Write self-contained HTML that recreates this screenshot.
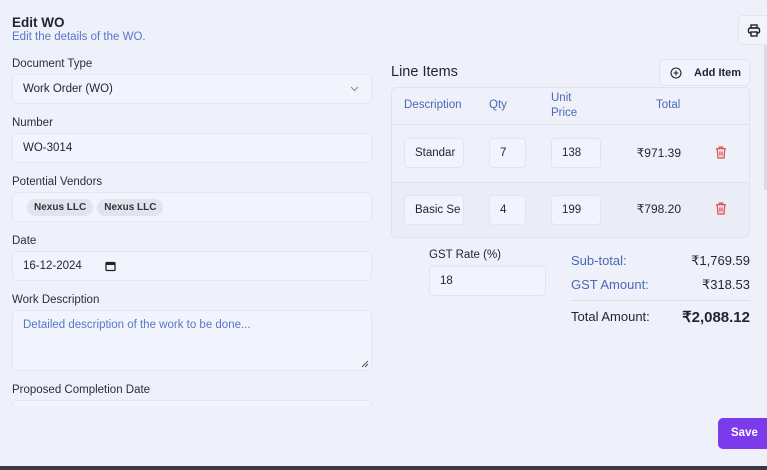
<!DOCTYPE html><html><head><style>
*{box-sizing:border-box;margin:0;padding:0}
body{width:767px;height:470px;overflow:hidden;background:#eef1fa;font-family:"Liberation Sans",sans-serif;color:#1f2430;position:relative;font-size:12px}
.a{position:absolute}
.lbl{position:absolute;left:12px;font-size:11.5px;color:#2a2f3a}
.box{position:absolute;left:12px;width:360px;height:30px;border:1px solid #e3e7f1;border-radius:5px;background:#f1f4fc;font-size:11.5px;padding:0 10px;display:flex;align-items:center}
.in{position:absolute;height:30px;border:1px solid #e1e5ef;border-radius:4px;background:#f1f4fc;font-size:11.5px;display:flex;align-items:center;padding-left:10px;overflow:hidden;white-space:nowrap}
.chip{background:#dfe4ee;border-radius:9px;padding:3px 7px;font-size:10px;font-weight:bold;margin-right:4px;color:#333}
.blue{color:#4a68b5}
</style></head><body>
<div class="a" style="left:12px;top:15px;font-size:13.5px;font-weight:bold">Edit WO</div>
<div class="a blue" style="left:12px;top:31px;font-size:11.5px;color:#5577c7">Edit the details of the WO.</div>

<div class="lbl" style="top:58px">Document Type</div>
<div class="box" style="top:74px">Work Order (WO)<svg class="a" style="right:12px;top:11px" width="9" height="6" viewBox="0 0 9 6"><path d="M1 1l3.5 3.5L8 1" stroke="#888" fill="none"/></svg></div>
<div class="lbl" style="top:117px">Number</div>
<div class="box" style="top:133px">WO-3014</div>
<div class="lbl" style="top:176px">Potential Vendors</div>
<div class="box" style="top:192px;padding-left:14px"><span class="chip">Nexus LLC</span><span class="chip">Nexus LLC</span></div>
<div class="lbl" style="top:235px">Date</div>
<div class="box" style="top:251px">16-12-2024<svg style="margin-left:23px" width="11" height="11" viewBox="0 0 11 11"><rect x="1" y="1.5" width="9" height="8" rx="1" fill="none" stroke="#222" stroke-width="1.3"/><rect x="1" y="1.5" width="9" height="2.5" fill="#222"/></svg></div>
<div class="lbl" style="top:294px">Work Description</div>
<div class="box" style="top:310px;height:61px;align-items:flex-start;padding-top:8px;color:#5577c7">Detailed description of the work to be done...<svg class="a" style="right:2px;bottom:2px" width="8" height="8"><path d="M1 7L7 1M4 7L7 4" stroke="#555"/></svg></div>
<div class="lbl" style="top:384px">Proposed Completion Date</div>
<div class="box" style="top:400px;height:6px;border-bottom:none;border-radius:5px 5px 0 0"></div>

<div class="a" style="left:738px;top:15px;width:32px;height:30px;border:1px solid #e1e5ef;border-radius:5px;background:#f1f4fc"><svg class="a" style="left:8px;top:8px" width="14" height="13" viewBox="0 0 14 13"><rect x="4" y="1" width="6" height="3" fill="none" stroke="#222" stroke-width="1.4"/><rect x="1.5" y="4" width="11" height="5" rx="1.5" fill="none" stroke="#222" stroke-width="1.4"/><rect x="4" y="8" width="6" height="4" fill="#f1f4fc" stroke="#222" stroke-width="1.4"/></svg></div>
<div class="a" style="left:764px;top:45px;width:3px;height:145px;background:#d8dce5"></div>

<div class="a" style="left:391px;top:64px;font-size:14.5px;font-weight:500">Line Items</div>
<div class="a" style="left:659px;top:59px;width:91px;height:27px;border:1px solid #e1e5ef;border-radius:5px;background:#f1f4fc;font-size:11px;font-weight:bold;display:flex;align-items:center;padding-left:10px"><svg width="12" height="12" viewBox="0 0 12 12"><circle cx="6" cy="6" r="5" fill="none" stroke="#222" stroke-width="1.1"/><path d="M6 3.5v5M3.5 6h5" stroke="#222" stroke-width="1.1"/></svg><span style="margin-left:12px">Add Item</span></div>

<div class="a" style="left:391px;top:87px;width:359px;height:151px;border:1px solid #dfe3ee;border-radius:5px;overflow:hidden">
<div class="a" style="left:0;top:0;width:100%;height:37px;border-bottom:1px solid #dfe3ee"></div>
<div class="a" style="left:0;top:94px;width:100%;height:57px;background:#eaedf6;border-top:1px solid #dfe3ee"></div>
</div>
<div class="a blue" style="left:404px;top:99px;font-size:11.5px">Description</div>
<div class="a blue" style="left:489px;top:99px;font-size:11.5px">Qty</div>
<div class="a blue" style="left:551px;top:91px;font-size:11.5px;line-height:15px">Unit<br>Price</div>
<div class="a blue" style="left:656px;top:99px;font-size:11.5px">Total</div>

<div class="in" style="left:404px;top:138px;width:60px">Standar</div>
<div class="in" style="left:489px;top:138px;width:37px">7</div>
<div class="in" style="left:551px;top:138px;width:50px">138</div>
<div class="a" style="left:620px;top:146px;width:61px;text-align:right;font-size:12px">₹971.39</div>
<div class="in" style="left:404px;top:195px;width:60px">Basic Se</div>
<div class="in" style="left:489px;top:195px;width:37px">4</div>
<div class="in" style="left:551px;top:195px;width:50px">199</div>
<div class="a" style="left:620px;top:202px;width:61px;text-align:right;font-size:12px">₹798.20</div>
<svg class="a" style="left:715px;top:146px" width="12" height="13" viewBox="0 0 11 12"><path d="M1 2.5h9M4 2.5V1h3v1.5M2 2.5l.7 8.5h5.6L9 2.5M4.5 5v4M6.5 5v4" fill="none" stroke="#e05555" stroke-width="1.2"/></svg>
<svg class="a" style="left:715px;top:202px" width="12" height="13" viewBox="0 0 11 12"><path d="M1 2.5h9M4 2.5V1h3v1.5M2 2.5l.7 8.5h5.6L9 2.5M4.5 5v4M6.5 5v4" fill="none" stroke="#e05555" stroke-width="1.2"/></svg>

<div class="a" style="left:429px;top:249px;font-size:11.5px">GST Rate (%)</div>
<div class="in" style="left:429px;top:266px;width:117px">18</div>
<div class="a blue" style="left:571px;top:253px;font-size:13px">Sub-total:</div>
<div class="a" style="left:640px;top:253px;width:110px;text-align:right;font-size:13px">₹1,769.59</div>
<div class="a blue" style="left:571px;top:277px;font-size:13px">GST Amount:</div>
<div class="a" style="left:640px;top:277px;width:110px;text-align:right;font-size:13px">₹318.53</div>
<div class="a" style="left:571px;top:300px;width:179px;height:1px;background:#dde1ea"></div>
<div class="a" style="left:571px;top:309px;font-size:13px;font-weight:500">Total Amount:</div>
<div class="a" style="left:630px;top:308px;width:120px;text-align:right;font-size:15px;font-weight:bold">₹2,088.12</div>

<div class="a" style="left:718px;top:418px;width:56px;height:31px;background:#7c3aed;border-radius:5px;color:#fff;font-size:11.5px;font-weight:bold;padding:9px 0 0 13px">Save</div>
<div class="a" style="left:0;top:466px;width:767px;height:4px;background:#3a3a3f"></div>
</body></html>
